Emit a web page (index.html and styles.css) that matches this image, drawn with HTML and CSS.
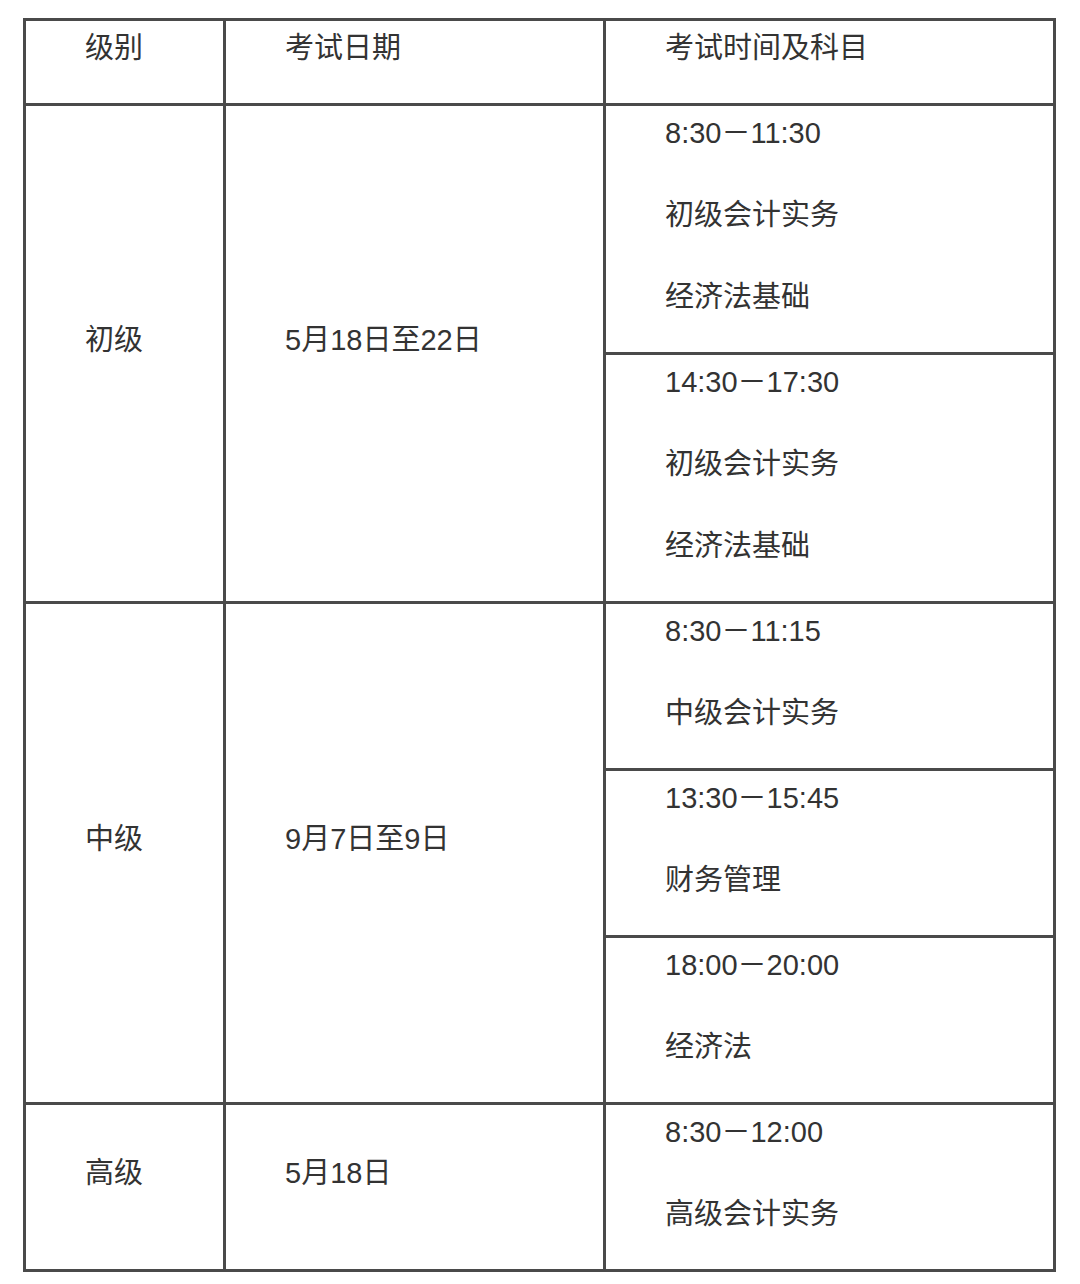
FILE: index.html
```html
<!DOCTYPE html>
<html lang="zh-CN">
<head>
<meta charset="utf-8">
<title>考试时间安排</title>
<link rel="stylesheet" href="styles.css">
</head>
<body>
<table class="exam">
  <colgroup>
    <col class="c1"><col class="c2"><col class="c3">
  </colgroup>
  <tr>
    <td><p>级别</p></td>
    <td><p>考试日期</p></td>
    <td><p>考试时间及科目</p></td>
  </tr>
  <tr>
    <td rowspan="2"><p>初级</p></td>
    <td rowspan="2"><p>5月18日至22日</p></td>
    <td><p>8:30－11:30</p><p>初级会计实务</p><p>经济法基础</p></td>
  </tr>
  <tr>
    <td><p>14:30－17:30</p><p>初级会计实务</p><p>经济法基础</p></td>
  </tr>
  <tr>
    <td rowspan="3"><p>中级</p></td>
    <td rowspan="3"><p>9月7日至9日</p></td>
    <td><p>8:30－11:15</p><p>中级会计实务</p></td>
  </tr>
  <tr>
    <td><p>13:30－15:45</p><p>财务管理</p></td>
  </tr>
  <tr>
    <td><p>18:00－20:00</p><p>经济法</p></td>
  </tr>
  <tr>
    <td><p>高级</p></td>
    <td><p>5月18日</p></td>
    <td><p>8:30－12:00</p><p>高级会计实务</p></td>
  </tr>
</table>
</body>
</html>
```

FILE: styles.css
```css
html, body {
  margin: 0;
  padding: 0;
  background: #ffffff;
}

body {
  font-family: "Liberation Sans", "Noto Sans CJK SC", sans-serif;
  font-size: 29px;
  color: #333333;
}

.exam {
  margin: 18px 0 0 23px;
  border-collapse: separate;
  border-spacing: 0;
  table-layout: fixed;
  width: 1033px;
  border-top: 3px solid #4a4a4a;
  border-left: 3px solid #4a4a4a;
}

.c1 { width: 200px; }
.c2 { width: 380px; }
.c3 { width: 450px; }

.exam td {
  box-sizing: border-box;
  border-right: 3px solid #4a4a4a;
  border-bottom: 3px solid #4a4a4a;
  padding: 0 0 0 59px;
  vertical-align: middle;
  text-align: left;
}

.exam p {
  margin: 0 0 30px;
  line-height: 54px;
  height: 52px;
  white-space: nowrap;
}
```
